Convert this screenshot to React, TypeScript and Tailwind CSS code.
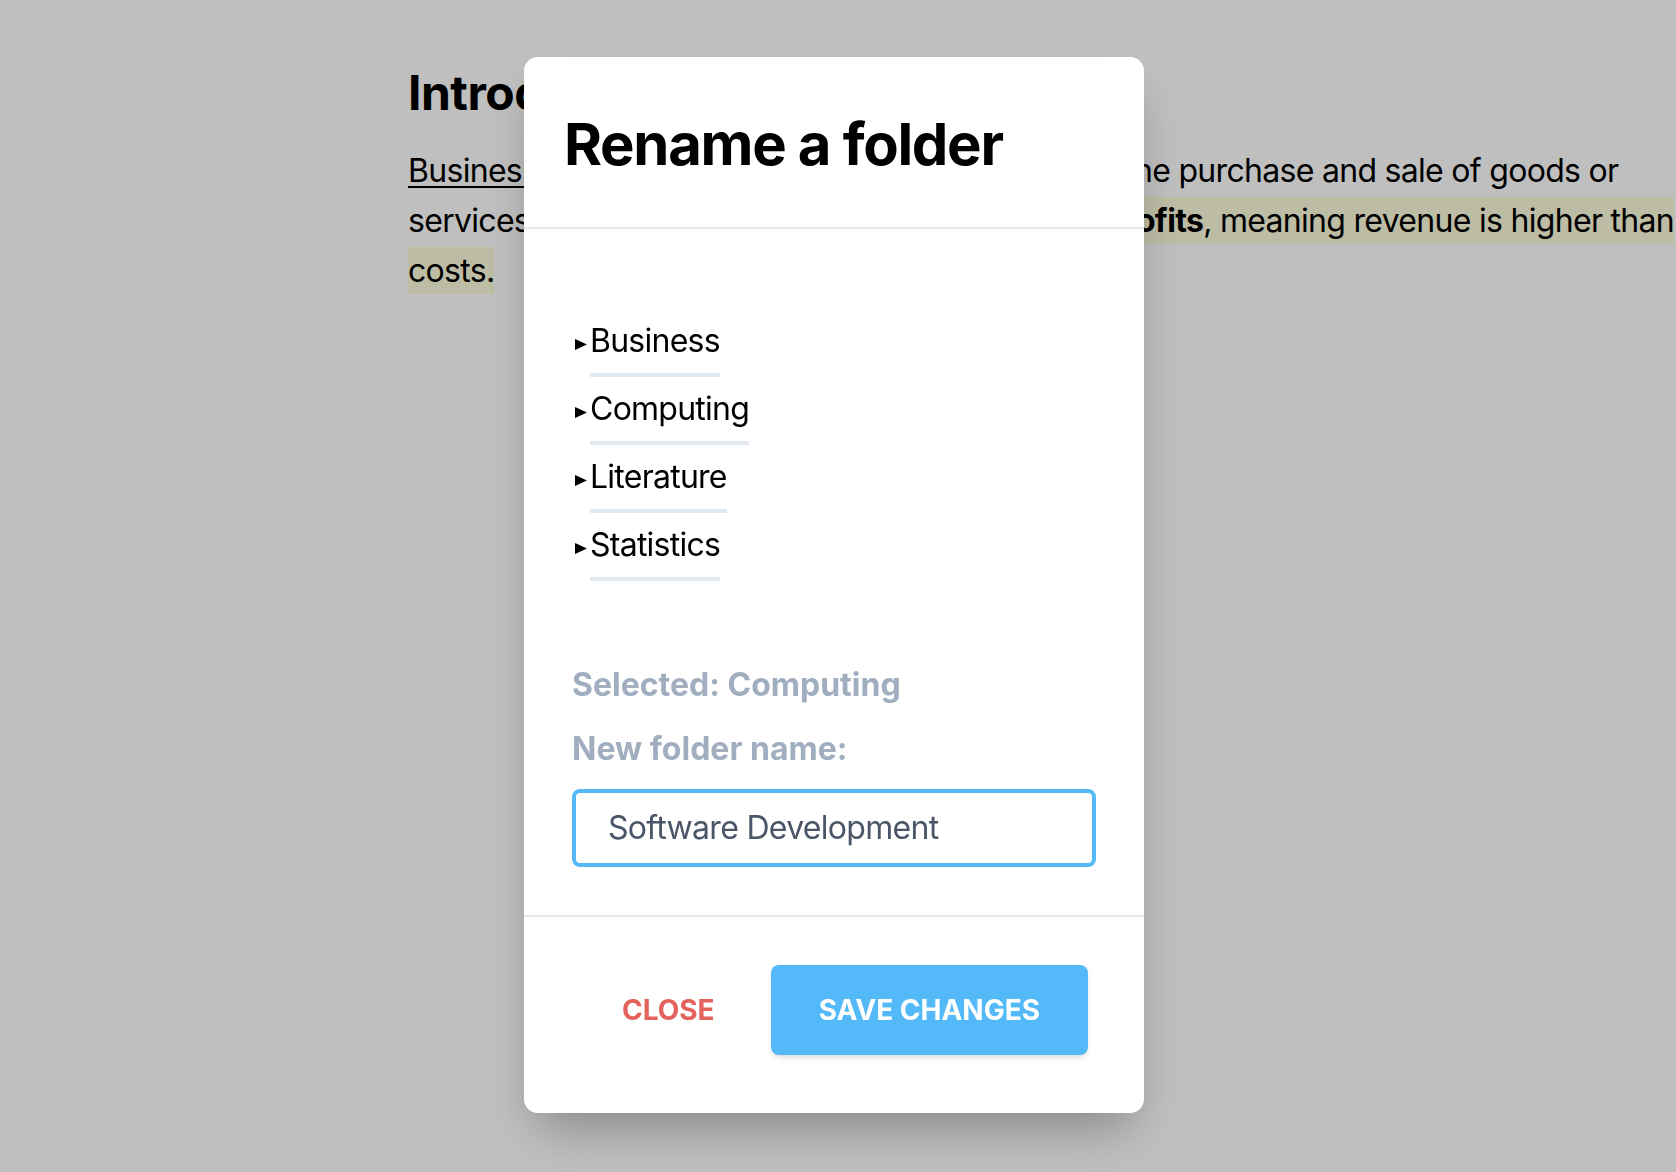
import React from "react";

const folders = ["Business", "Computing", "Literature", "Statistics"];

function Caret() {
  return (
    <svg
      width="12"
      height="11"
      viewBox="0 0 12 11"
      className="mt-[22px] ml-[3px] mr-[3px] shrink-0"
    >
      <polygon points="0,0 12,5.5 0,11" fill="#000" />
    </svg>
  );
}

export default function App() {
  return (
    <div className="relative min-h-screen h-[1172px] overflow-hidden bg-white font-['Inter',sans-serif] text-black">
      {/* page underneath */}
      <div className="pl-[408px] pt-[63px]">
        <h2 className="text-[48px] font-bold leading-[60px] tracking-[-0.5px]">Introduction</h2>
        <p className="mt-[23px] text-[32px] leading-[50px] tracking-[-0.7px] whitespace-nowrap">
          <a className="underline decoration-2 underline-offset-4">Business</a> is the economic activity that consists of the purchase and sale of goods or
          <br />
          services. <mark className="bg-[#fcfbdc] py-1 text-black">The main aim of a business is to make <b>profits</b>, meaning revenue is higher than{" "}
          <br />
          costs.</mark>
        </p>
      </div>

      {/* backdrop + modal */}
      <div className="fixed inset-0 bg-black/25 flex items-center justify-center pr-2 pb-[3px]">
        <div className="w-[620px] bg-white rounded-[14px] shadow-[0_25px_50px_-12px_rgba(0,0,0,0.3)] flex flex-col">
          <div className="h-[172px] border-b-2 border-[#e2e8f0] px-10 pt-1 flex items-center">
            <h1 className="text-[58px] font-bold leading-none tracking-[-1.3px]">Rename a folder</h1>
          </div>

          <div className="px-12 pt-[88px] pb-12">
            <ul>
              {folders.map((f) => (
                <li key={f} className="flex items-start mb-2 last:mb-0">
                  <Caret />
                  <span className="text-[32px] leading-[48px] tracking-[-0.75px] pb-2 border-b-4 border-[#e2e8f0]">
                    {f}
                  </span>
                </li>
              ))}
            </ul>

            <p className="mt-20 text-[32px] leading-[48px] font-bold text-[#a0aec0]">Selected: Computing</p>
            <label className="block mt-4 text-[32px] leading-[48px] font-bold text-[#a0aec0]">New folder name:</label>
            <input
              className="mt-4 w-full h-[78px] border-4 border-[#55b8f7] rounded-lg px-8 text-[32px] tracking-[-0.7px] text-[#4a5568] outline-none"
              defaultValue="Software Development"
            />
          </div>

          <div className="border-t-2 border-[#e2e8f0] pt-12 pb-[58px] pl-12 pr-14 flex justify-end gap-2">
            <button className="shrink-0 whitespace-nowrap h-[90px] px-12 text-[28px] font-bold uppercase text-[#e4625c]">
              Close
            </button>
            <button className="shrink-0 whitespace-nowrap h-[90px] px-12 text-[28px] font-bold uppercase text-white bg-[#53b9f9] rounded-lg shadow-md">
              Save Changes
            </button>
          </div>
        </div>
      </div>
    </div>
  );
}
